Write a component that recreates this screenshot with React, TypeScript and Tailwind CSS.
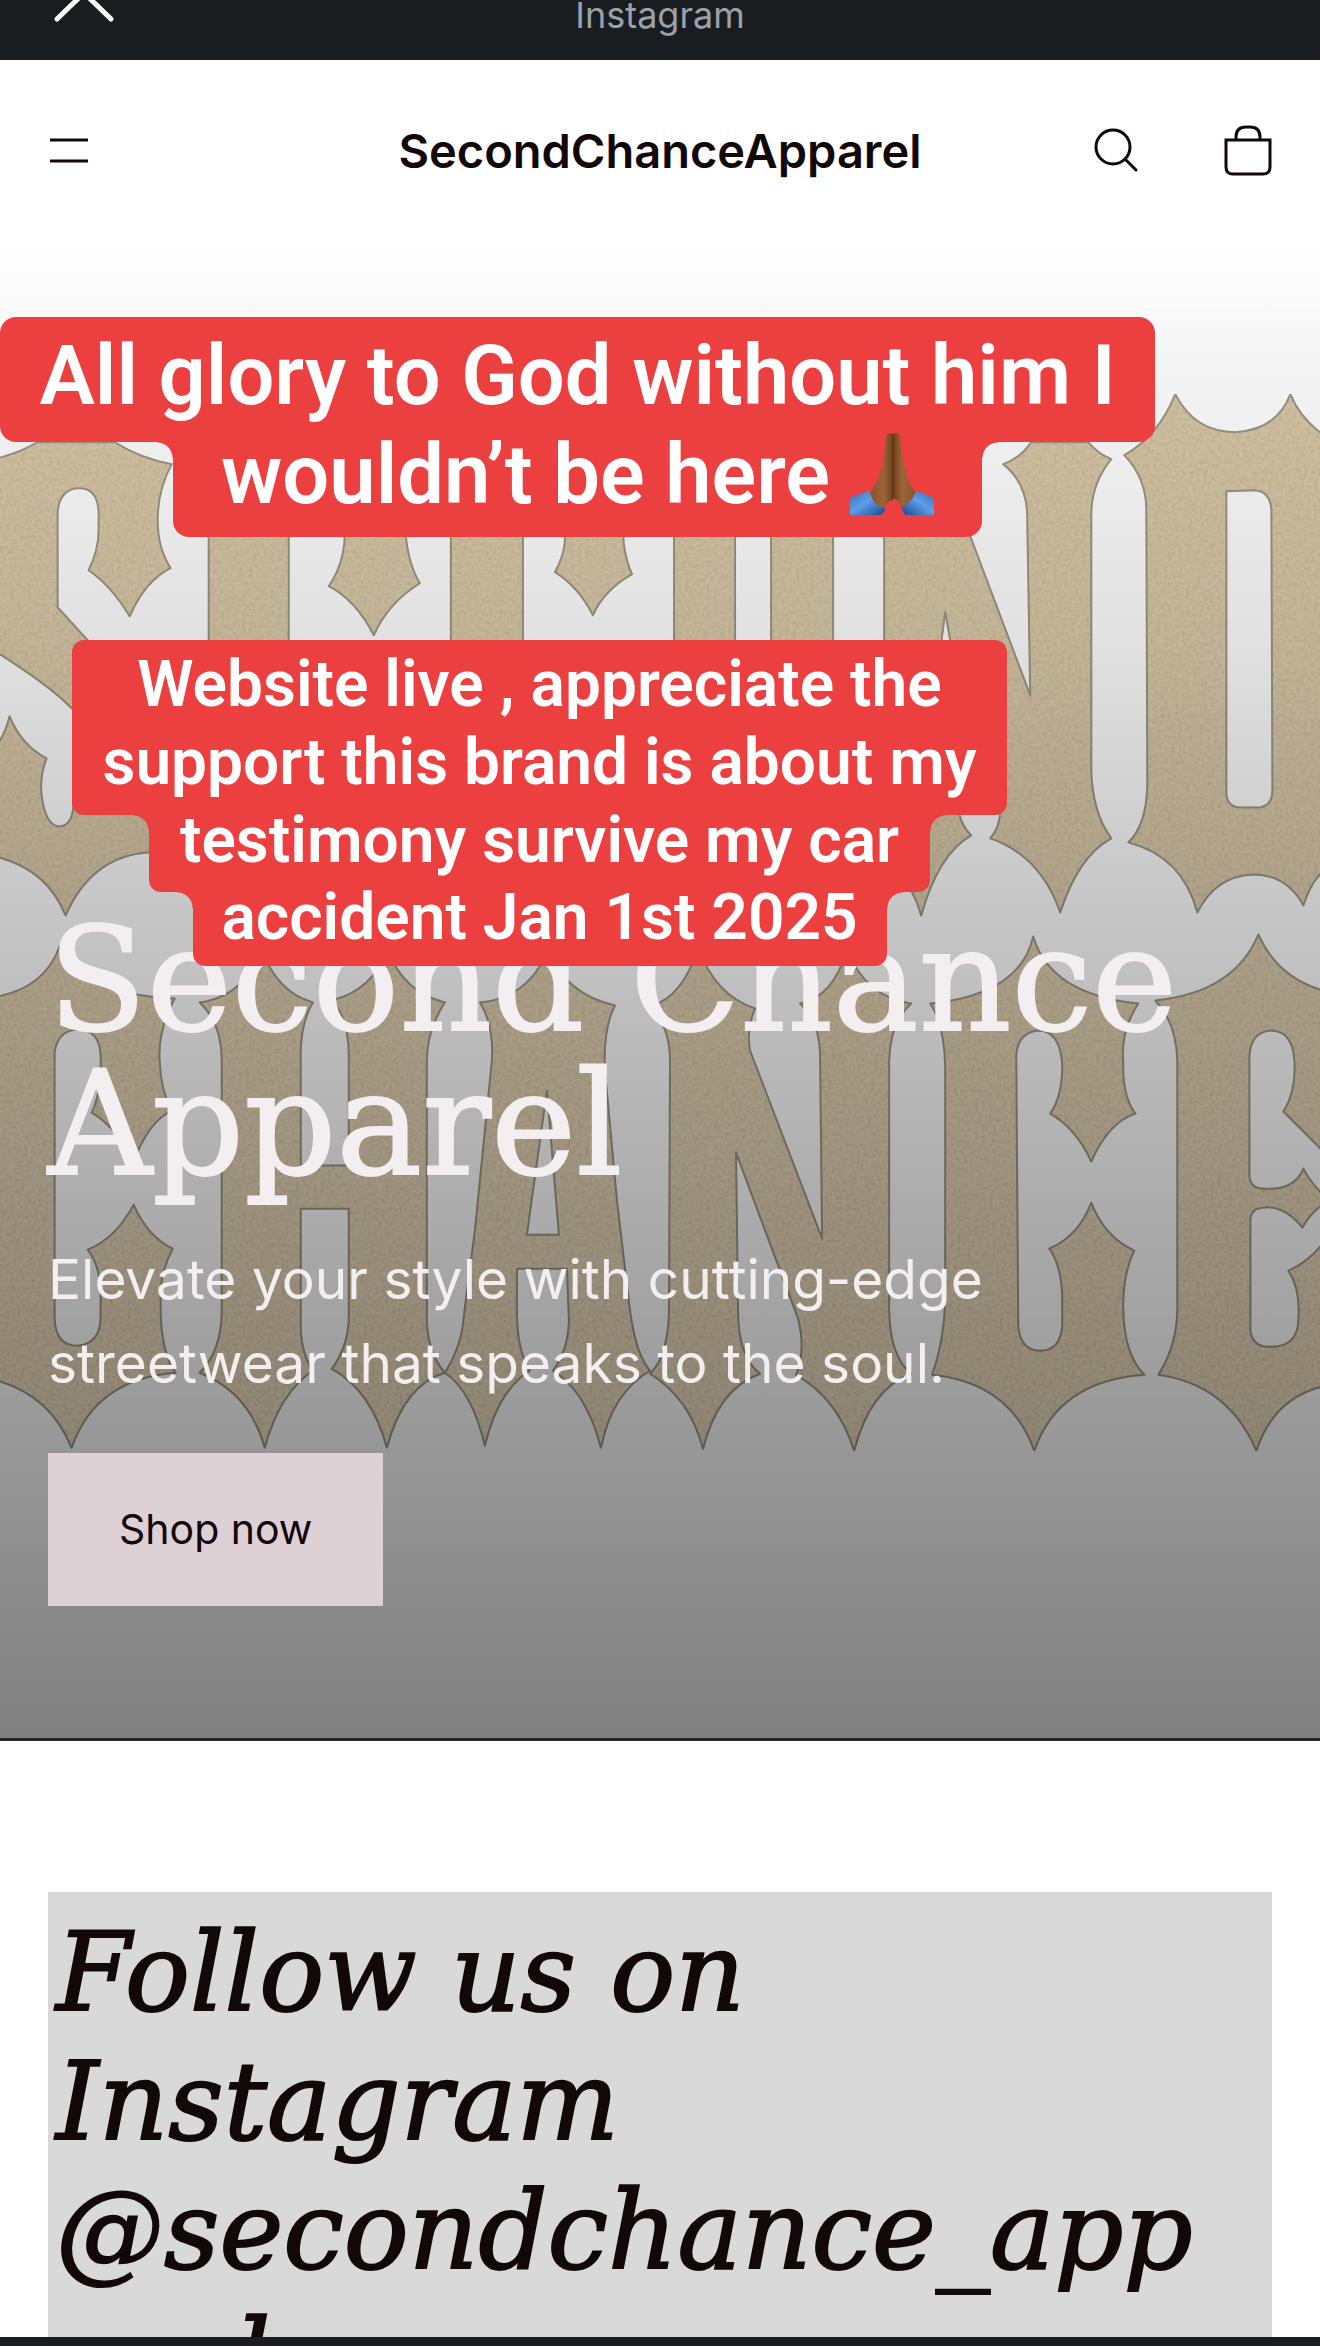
import React from "react";

const SERIF = "font-['DejaVu_Serif',serif]";

/* Brand artwork printed on the hero photo: sand-coloured emblem shapes. */
function HeroArtwork() {
  return (
    <svg
      aria-hidden="true"
      className="absolute inset-0 h-full w-full"
      viewBox="0 242 1320 1495"
      preserveAspectRatio="xMidYMin slice"
    >
      <defs>
        <linearGradient id="shade" x1="0" y1="0" x2="0" y2="1">
          <stop offset="0" stopColor="#000" stopOpacity="0" />
          <stop offset="0.1" stopColor="#000" stopOpacity="0.05" />
          <stop offset="0.27" stopColor="#000" stopOpacity="0.12" />
          <stop offset="0.44" stopColor="#000" stopOpacity="0.22" />
          <stop offset="0.77" stopColor="#000" stopOpacity="0.39" />
          <stop offset="1" stopColor="#000" stopOpacity="0.5" />
        </linearGradient>
        <linearGradient id="sand" gradientUnits="userSpaceOnUse" x1="0" y1="390" x2="0" y2="1450">
          <stop offset="0" stopColor="#dccaa8" />
          <stop offset="0.5" stopColor="#e2d1b0" />
          <stop offset="1" stopColor="#f2e2c4" />
        </linearGradient>
        <filter id="grain" x="0" y="0" width="100%" height="100%">
          <feTurbulence type="fractalNoise" baseFrequency="0.28" numOctaves="2" seed="4" result="n" />
          <feColorMatrix in="n" type="matrix" values="0 0 0 0 0.4  0 0 0 0 0.35  0 0 0 0 0.25  0 0 0 0.8 -0.28" result="g" />
          <feComposite in="g" in2="SourceAlpha" operator="in" result="c" />
          <feMerge>
            <feMergeNode in="SourceGraphic" />
            <feMergeNode in="c" />
          </feMerge>
        </filter>
      </defs>
      <rect x="0" y="242" width="1320" height="1495" fill="#fff" />
      <g fill="url(#sand)" stroke="#9a9784" strokeWidth="2" strokeLinejoin="round" fillRule="evenodd" filter="url(#grain)">
        {/* upper row */}
        <path d="M-9 460Q20 453 38 442L115 442Q140 458 172 464Q158 490 158 520Q158 548 171 568Q146 580 130 616Q112 586 89 570Q99 550 99 530L99 512Q98 488 80 488Q60 488 58 512L58 607L88 640L140 680L140 720L72 708Q50 685 -9 648Z" />
        <path d="M-9 752Q4 740 10 716Q22 745 47 758Q40 775 42 795Q46 826 60 826Q72 826 74 805L80 780L200 780L200 852L148 852Q92 856 66 915Q46 866 -9 855Z" />
        <path d="M209 520H289V660H209Z" />
        <path d="M345 520L345 536Q344 564 329 586Q356 600 374 635Q388 603 420 583Q406 560 405 520Z" />
        <path d="M451 520H523V660H451Z" />
        <path d="M565 520L565 540Q564 556 555 572Q578 586 593 615Q604 590 632 574Q622 552 623 520Z" />
        <path d="M674 520H735V660H674Z" />
        <path d="M771 520H833V660H771Z" />
        <path d="M884 520H964L1030 695L1027 520Q1028 484 1003 464Q1020 458 1031 442H1088Q1098 454 1111 459Q1092 482 1091 512L1091 770Q1092 812 1111 838Q1078 856 1060 912Q1040 855 990 838Q1000 826 1000 810L950 640L945 612L940 650L884 650Z" />
        <path d="M900 800L957 800Q958 822 971 835Q938 854 921 915Q914 890 900 875Z" />
        <path d="M1124 455Q1158 436 1175 394Q1194 432 1235 432Q1276 430 1290 394Q1300 420 1330 440L1330 865Q1312 876 1303 905Q1286 874 1252 874Q1215 876 1197 912Q1182 856 1128 842Q1146 825 1147 785L1146 510Q1146 478 1124 455ZM1226 491L1226 795Q1228 807 1240 807L1260 807Q1272 805 1272 790L1271 510Q1270 491 1254 490Z" />
        {/* lower row */}
        <path d="M-9 997Q44 990 60 946Q78 994 175 998Q158 1030 160 1060Q161 1090 172 1110Q150 1120 134 1160Q116 1126 92 1112Q102 1092 101 1055Q100 1029 78 1029Q58 1030 55 1052L55 1318Q56 1345 78 1345Q100 1343 101 1318L101 1290Q100 1264 88 1249Q116 1238 134 1204Q148 1236 173 1248Q160 1272 161 1300Q160 1350 176 1372Q96 1378 72 1447Q50 1392 -9 1378Z" />
        <path d="M200 1002Q244 996 262 950Q278 992 313 1002Q300 1024 301 1060L301 1165H349L349 1060Q350 1020 332 1000Q372 990 388 950Q404 992 445 1002Q427 1030 427 1060L427 1320Q428 1352 445 1372Q404 1384 387 1447Q372 1390 332 1368Q349 1345 349 1315L349 1208H301L301 1320Q300 1350 313 1370Q280 1392 265 1447Q250 1392 200 1372Q222 1350 222 1310L222 1060Q222 1022 200 1002Z" />
        <path d="M480 1002Q528 998 548 950Q566 994 615 1005Q603 1028 605 1070L617 1200L630 1310Q636 1354 650 1370Q612 1392 601 1447Q586 1390 553 1370Q568 1350 569 1320L567 1268H517L517 1310Q517 1350 530 1370Q498 1390 485 1445Q472 1390 445 1372Q462 1345 464 1315L475 1230L492 1060Q494 1024 480 1002ZM547 1090L527 1234H559Z" />
        <path d="M650 1006Q684 996 698 946Q714 994 755 1008Q746 1028 750 1050L822 1238L820 1060Q821 1022 800 1003Q834 996 847 948Q864 996 911 1003Q890 1022 889 1060L889 1310Q890 1356 911 1373Q870 1388 854 1450Q838 1398 796 1374Q806 1350 798 1318L736 1152L738 1310Q738 1356 760 1373Q718 1388 703 1448Q690 1398 650 1373Q668 1356 669 1310L670 1060Q670 1026 650 1006Z" />
        <path d="M930 1003Q1020 994 1033 936Q1050 994 1138 1003Q1120 1030 1123 1062Q1122 1096 1135 1113Q1108 1122 1091 1161Q1076 1128 1050 1113Q1062 1096 1062 1065Q1060 1030 1038 1030Q1018 1032 1016 1054L1018 1325Q1020 1350 1040 1350Q1060 1350 1062 1325L1062 1300Q1062 1266 1049 1248Q1078 1236 1091 1202Q1104 1236 1134 1250Q1122 1274 1123 1310Q1124 1354 1144 1374Q1058 1380 1034 1450Q1010 1382 932 1374Q944 1340 945 1300L945 1065Q944 1024 930 1003Z" />
        <path d="M1155 1000Q1234 992 1258 934Q1278 980 1330 992L1330 1158L1283 1111Q1296 1090 1294 1060Q1292 1030 1270 1030Q1250 1032 1249 1056L1249 1176Q1250 1188 1264 1188Q1294 1190 1303 1168Q1312 1186 1330 1200Q1312 1208 1302 1227Q1284 1204 1262 1207Q1250 1208 1250 1220L1250 1330Q1252 1345 1266 1346Q1298 1348 1298 1318Q1300 1288 1288 1270Q1314 1258 1330 1232L1330 1384Q1274 1394 1256 1450Q1228 1384 1158 1374Q1176 1346 1177 1310L1177 1060Q1176 1022 1155 1000Z" />
      </g>
      <rect x="0" y="242" width="1320" height="1495" fill="url(#shade)" />
    </svg>
  );
}

function PrayingHands() {
  return (
    <svg role="img" aria-label="Folded hands" viewBox="0 0 84 84" className="h-[84px] w-[84px] shrink-0">
      <defs>
        <linearGradient id="skinL" x1="0" x2="1" y1="0" y2="0">
          <stop offset="0" stopColor="#8a552c" />
          <stop offset="0.6" stopColor="#9c6438" />
          <stop offset="1" stopColor="#6e3f1d" />
        </linearGradient>
        <linearGradient id="skinR" x1="0" x2="1" y1="0" y2="0">
          <stop offset="0" stopColor="#6e3f1d" />
          <stop offset="0.4" stopColor="#9c6438" />
          <stop offset="1" stopColor="#8a552c" />
        </linearGradient>
        <linearGradient id="cuffL" x1="0" x2="1" y1="0" y2="1">
          <stop offset="0" stopColor="#4068a0" />
          <stop offset="0.45" stopColor="#5d9fec" />
          <stop offset="1" stopColor="#1d4485" />
        </linearGradient>
        <linearGradient id="cuffR" x1="1" x2="0" y1="0" y2="1">
          <stop offset="0" stopColor="#4068a0" />
          <stop offset="0.45" stopColor="#5d9fec" />
          <stop offset="1" stopColor="#1d4485" />
        </linearGradient>
      </defs>
      <path fill="url(#cuffL)" d="M0 66Q10 61 20 59L36 77L31 83H0Z" />
      <path fill="url(#cuffR)" d="M84 66Q74 61 65 59L51 75L55 83H84Z" />
      <path fill="url(#skinL)" d="M43 2Q37 -1 36 5L33 32Q30 38 29 44Q27 52 20 60Q22 72 33 76Q36 70 43 68Z" />
      <path fill="url(#skinR)" d="M43 2Q49 -1 50 5L53 30Q56 36 57 44Q58 52 66 60Q62 70 52 75Q48 68 43 66Z" />
      <path stroke="#55300f" strokeWidth="1" fill="none" d="M43 3V67" />
    </svg>
  );
}

/* Inner fillets where a narrower caption row hangs from a wider one. */
function Fillets() {
  return (
    <>
      <span className="absolute top-0 right-full size-4 bg-[radial-gradient(circle_at_bottom_left,transparent_15px,#ec4040_16px)]" />
      <span className="absolute top-0 left-full size-4 bg-[radial-gradient(circle_at_bottom_right,transparent_15px,#ec4040_16px)]" />
    </>
  );
}

export default function App() {
  return (
    <div className="relative flex h-screen flex-col overflow-hidden bg-white font-['Inter',sans-serif] text-[#120709]">
      <div className="relative flex h-[60px] shrink-0 justify-center bg-[#1a1d20] text-[#9ba1ab]">
        <button aria-label="Close" className="absolute top-0 left-[52px] text-white">
          <svg viewBox="0 0 64 24" className="h-6 w-16" fill="none" stroke="currentColor" strokeWidth="5" strokeLinecap="round">
            <path d="M5 19L34 -9M59 19L30 -9" />
          </svg>
        </button>
        <span className="text-4xl leading-[30px]">Instagram</span>
      </div>

      <header className="grid h-[182px] shrink-0 grid-cols-[1fr_auto_1fr] items-center px-12">
        <button aria-label="Menu" className="justify-self-start">
          <svg viewBox="0 0 42 42" className="size-[42px]" stroke="currentColor" strokeWidth="3">
            <path d="M2 10H40M2 31H40" />
          </svg>
        </button>
        <a href="#" className="text-[47px] font-semibold">
          SecondChanceApparel
        </a>
        <div className="flex items-center gap-[83px] justify-self-end">
          <button aria-label="Search">
            <svg viewBox="0 0 52 52" className="size-[52px]" fill="none" stroke="currentColor" strokeWidth="3" strokeLinecap="round">
              <circle cx="24" cy="22" r="17" />
              <path d="M36 34L47 45" />
            </svg>
          </button>
          <button aria-label="Cart">
            <svg viewBox="0 0 48 52" className="h-[52px] w-12" fill="none" stroke="currentColor" strokeWidth="3">
              <path d="M2 15H46V42Q46 49 39 49H9Q2 49 2 42Z" />
              <path d="M12 15V12Q12 2 22 2H26Q36 2 36 12V15" />
            </svg>
          </button>
        </div>
      </header>

      <section className="relative shrink-0 overflow-hidden border-b-[3px] border-[#242627] px-12 pt-[666px] pb-[132px] text-[#f3eeef]">
        <HeroArtwork />
        <div className="relative">
          <h1 className={`${SERIF} text-[144px] leading-[144px] [-webkit-text-stroke:2px_#f3eeef]`}>
            Second Chance
            <br />
            Apparel
          </h1>
          <p className="mt-[41px] text-[55px] leading-[84px]">
            Elevate your style with cutting-edge
            <br />
            streetwear that speaks to the soul.
          </p>
          <button className="mt-12 h-[153px] bg-[#ddd1d5] px-[71px] text-[41px] text-[#120709]">Shop now</button>
        </div>
      </section>

      <section className="min-h-0 flex-1 overflow-hidden px-12 pt-[151px]">
        <h2 className={`${SERIF} bg-[#d9d9d9] px-2 pt-4 text-[108px] leading-[129px] italic [-webkit-text-stroke:2px_#120709]`}>
          Follow us on
          <br />
          Instagram
          <br />
          @secondchance_app
          <br />
          arel
        </h2>
      </section>

      <div className="h-[9px] shrink-0 bg-[#1a1d20]" />

      <div className="absolute top-[317px] left-0 flex flex-col items-center font-['Roboto',sans-serif] text-[83px] font-semibold whitespace-nowrap text-white">
        <div className="flex h-[125px] w-[1155px] justify-center rounded-2xl bg-[#ec4040] leading-[117px]">
          All glory to God without him I
        </div>
        <div className="relative flex h-[95px] w-[809px] justify-center gap-5 rounded-b-2xl bg-[#ec4040] leading-[66px]">
          <Fillets />
          wouldn’t be here
          <span className="-mt-2.5">
            <PrayingHands />
          </span>
        </div>
      </div>

      <div className="absolute top-[640px] left-[72px] flex flex-col items-center text-center font-['Roboto',sans-serif] text-[64px] leading-[78px] font-semibold whitespace-nowrap text-white">
        <div className="h-[175px] w-[935px] rounded-xl bg-[#ec4040] pt-1.5">
          Website live , appreciate the
          <br />
          support this brand is about my
        </div>
        <div className="relative h-[77px] w-[781px] rounded-b-xl bg-[#ec4040] leading-[51px]">
          <Fillets />
          testimony survive my car
        </div>
        <div className="relative h-[74px] w-[694px] rounded-b-xl bg-[#ec4040] leading-[51px]">
          <Fillets />
          accident Jan 1st 2025
        </div>
      </div>
    </div>
  );
}
